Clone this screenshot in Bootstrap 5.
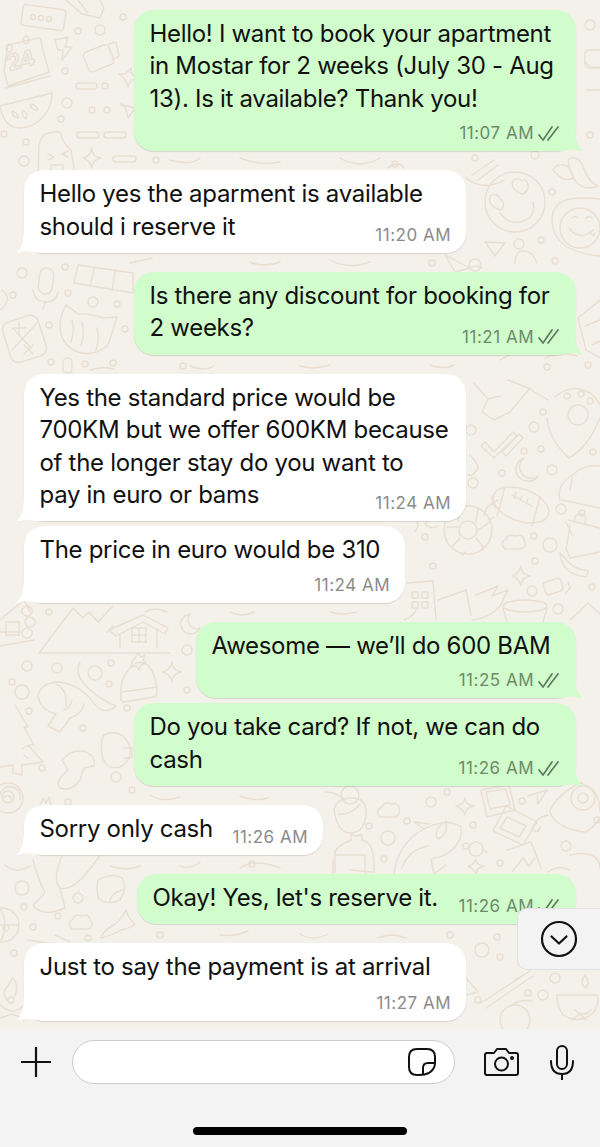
<!DOCTYPE html>
<html lang="en">
<head>
  <meta charset="UTF-8">
  <title>Chat</title>
  <link href="https://cdn.jsdelivr.net/npm/bootstrap@5.3.2/dist/css/bootstrap.min.css" rel="stylesheet" />
  <style>
    body {
      width: 600px;
      height: 1147px;
      overflow: hidden;
      background: #f3f3f3;
      font-family: "Inter", "Liberation Sans", sans-serif;
    }
    .chat-area {
      height: 1029px;
      padding-top: 10px;
      background: #f4f1ea;
      overflow: hidden;
    }
    .doodles {
      position: absolute;
      top: 0;
      left: 0;
      fill: none;
      stroke: #e8dfd2;
      stroke-width: 1.4;
      stroke-linecap: round;
      stroke-linejoin: round;
    }
    .doodles text {
      font-family: "Inter", sans-serif;
      font-size: 22px;
      font-weight: 700;
    }
    .bubble {
      position: relative;
      padding: 8px 15px 11px 15.5px;
      border-radius: 20px;
      box-shadow: 0 1px 1px rgba(0, 0, 0, .12);
      color: #111;
      font-size: 24px;
      letter-spacing: -.3px;
      line-height: 32.4px;
    }
    .bubble::after {
      content: "";
      position: absolute;
      bottom: 0;
      width: 26px;
      height: 26px;
    }
    .bubble-in {
      align-self: flex-start;
      margin-left: 24px;
      background: #fff;
    }
    .bubble-in::after {
      left: -8px;
      background: #fff;
      clip-path: path("M8 0 L26 26 L8 24 C6 25 3 26 0 26 C5 22 8 16 8 0 Z");
    }
    .bubble-out {
      align-self: flex-end;
      margin-right: 24px;
      padding-right: 17px;
      background: #d0fdcb;
    }
    .bubble-out::after {
      right: -7px;
      background: #d0fdcb;
      clip-path: path("M18 0 L0 26 L18 24 C20 25 23 26 26 26 C21 22 18 16 18 0 Z");
    }
    .w-full { width: 442px; }
    .w-price { width: 381px; }
    .w-awesome { width: 380px; }
    .w-sorry { width: 299px; }
    .w-okay { width: 439px; }
    .gap-big { margin-top: 19px; }
    .gap-tiny { margin-top: 5px; }
    .pb-one { padding-bottom: 10.6px; }
    .stamp {
      display: flex;
      align-items: center;
      gap: 4px;
      flex-shrink: 0;
      height: 14px;
      font-size: 17px;
      letter-spacing: .5px;
      line-height: 14px;
      white-space: nowrap;
      color: #8b8b8b;
    }
    .bubble-out .stamp { color: #6d8a6c; }
    .stamp-row { margin-top: 12px; }
    .stamp-row-last { margin-top: 13px; }
    .stamp-float {
      position: absolute;
      right: 15px;
      bottom: 11px;
    }
    .bubble-out .stamp-float { right: 16px; }
    .bubble-out .stamp-row { margin-right: -1px; }
    .msg-text {
      width: fit-content;
      margin-bottom: -1px;
      white-space: pre-line;
    }
    .scroll-btn {
      position: absolute;
      top: 908px;
      left: 517px;
      width: 83px;
      height: 62px;
      background: #f3f3f3;
      border: 1px solid #e2e2e2;
      border-right: 0;
      border-radius: 10px 0 0 10px;
    }
    .composer {
      height: 118px;
      padding-top: 11px;
    }
    .composer-row { padding: 0 25px 0 21px; }
    .msg-input {
      width: 383px;
      height: 44px;
      margin: 0 29px 0 21px;
      padding-right: 18px;
      background: #fff;
      border: 1px solid #cdcdcd;
      border-radius: 22px;
    }
    .home-bar {
      width: 214px;
      height: 8px;
      margin: 43px auto 0;
      background: #000;
      border-radius: 4px;
    }
    .cam-icon { margin-right: 31px; }
  </style>
</head>
<body>

<div class="position-relative d-flex flex-column chat-area">
  <svg class="doodles" width="600" height="1029" viewBox="0 0 600 1029" aria-hidden="true">
    <!-- top left -->
    <rect x="22" y="7" width="43" height="21" rx="3" transform="rotate(8 43 17)"/>
    <circle cx="33" cy="17" r="2.5"/><circle cx="41" cy="18" r="2.5"/><circle cx="49" cy="19" r="2.5"/>
    <path d="M8 45 L38 38 Q41 38 41 42 L49 72 L8 86 L4 70 Z M6 88 L50 76 M9 44 a3 4 0 1 0 .1 0 M26 36 a3 4 0 1 0 .1 0"/>
    <text x="9" y="71" transform="rotate(-14 9 71)">24</text>
    <path d="M55 40 L68 37 L65 47 L72 47 L62 60 L63 50 L58 50 Z"/>
    <rect x="85" y="48" width="27" height="21" rx="4" transform="rotate(-22 98 58)"/>
    <path d="M109 44 L116 42 L119 56 L112 60"/>
    <path d="M0 106 L52 93 C52 115 34 128 20 128 C8 128 2 118 0 106 Z M12 111 q5 1 6 7 q-6 -1 -6 -7 M23 110 q5 3 3 9 q-5 -3 -3 -9 M30 104 q6 0 8 6 q-6 1 -8 -6"/>
    <circle cx="78" cy="31" r="3"/><circle cx="100" cy="30" r="5"/><circle cx="123" cy="17" r="3"/><circle cx="65" cy="71" r="3"/>
    <circle cx="105" cy="86" r="3"/><rect x="76" y="83" width="21" height="6" rx="3"/>
    <path d="M131 68 Q130 77 140 78 Q129 78 128 88 Q127 79 119 74 Q127 75 131 68 Z"/>
    <circle cx="67" cy="103" r="5"/><circle cx="61" cy="119" r="3"/><circle cx="92" cy="110" r="3"/><circle cx="107" cy="110" r="3"/>
    <path d="M120 104 L135 108 L128 118 L126 108 Z"/>
    <circle cx="4" cy="134" r="3"/><circle cx="26" cy="142" r="3"/><circle cx="24" cy="161" r="5"/>
    <rect x="77" y="132" width="22" height="6" rx="3"/><rect x="104" y="132" width="22" height="6" rx="3"/><rect x="113" y="156" width="23" height="6" rx="3"/>
    <path d="M38 175 L39 145 Q41 132 55 132 L60 132 L63 140 L66 145 L71 150 L75 175 M48 154 l6 3 l-6 3 M68 151 l-6 3 l6 3 M51 165 h12 v6 q-6 6 -12 0 z"/>
    <path d="M92 148 Q92 157 101 158 Q92 160 92 168 Q90 160 83 158 Q90 157 92 148 Z"/>
    <path d="M66 0 L82 14 L100 18 L104 8 L100 0 M78 0 L88 13"/>
    <!-- top right strip -->
    <rect x="585" y="50" width="30" height="18" rx="4"/><circle cx="590" cy="135" r="3"/><circle cx="590" cy="25" r="5"/>
    <path d="M585 62 q6 8 15 5 M586 90 h14"/>
    <!-- faces right -->
    <circle cx="515" cy="202" r="30"/>
    <path d="M500 199 c-4 -8 -13 -4 -10 3 c2 4 6 7 11 8 c3 -4 4 -8 -1 -11 Z M522 181 c-5 -5 -12 -1 -9 6 c1 3 6 6 10 7 c4 -2 7 -7 4 -12 c-1 -3 -4 -3 -5 -1 Z M500 213 q12 16 29 5 q6 -6 4 -16"/>
    <path d="M600 256 C580 254 552 248 552 220 C552 198 574 196 600 199"/>
    <circle cx="580" cy="228" r="20"/>
    <path d="M569 228 q11 14 24 2 M572 218 q3 -3 6 0 M586 218 q3 -3 6 0 M590 232 q4 6 5 1"/>
    <path d="M553 170 q4 -8 14 -4 q4 2 6 12 q-8 4 -14 -2 z M568 160 q8 -6 14 4 q6 18 16 22 q-20 8 -28 -16 z"/>
    <circle cx="552" cy="192" r="3"/><circle cx="541" cy="240" r="3"/><circle cx="519" cy="244" r="5"/><circle cx="475" cy="265" r="6"/><circle cx="555" cy="261" r="3"/><circle cx="475" cy="158" r="3"/><circle cx="535" cy="155" r="4"/>
    <path d="M485 242 L505 243 L495 256 Z"/>
    <path d="M472 175 L494 160 M478 180 L498 165 M515 263 q0 -12 8 -12 q10 0 14 12"/>
    <path d="M445 255 L470 268 L455 272 Z"/>
    <path d="M600 300 L578 318 L586 350 L600 358 M585 326 l15 -6 M592 345 l8 -4"/>
    <path d="M500 360 q20 -12 40 -8 M545 358 q18 -8 32 -2"/><circle cx="547" cy="367" r="3"/><circle cx="588" cy="365" r="3"/>
    <!-- left mid -->
    <circle cx="22" cy="273" r="5"/><circle cx="65" cy="267" r="3"/><circle cx="68" cy="293" r="3"/><circle cx="13" cy="295" r="3"/><circle cx="93" cy="302" r="5"/><circle cx="117" cy="304" r="3"/><circle cx="49" cy="325" r="3"/><circle cx="125" cy="329" r="3"/><circle cx="51" cy="362" r="3"/><circle cx="85" cy="364" r="3"/><circle cx="113" cy="363" r="3"/>
    <rect x="39" y="268" width="14" height="26" rx="7" transform="rotate(6 46 281)"/>
    <path d="M33 290 q2 12 13 12 q10 0 12 -10 M45 303 l-2 6"/>
    <path d="M78 265 L133 273 L133 293 L74 283 Z M94 268 L90 287 M115 271 L112 291"/>
    <path d="M66 305 L78 314 Q90 313 103 318 L117 317 Q113 330 108 345 Q95 357 78 352 Q60 345 60 325 Q60 315 66 305 Z M72 320 q3 10 -1 22 M82 322 q3 10 -1 24 M97 328 q3 10 -1 22"/>
    <rect x="6" y="318" width="37" height="42" rx="8" transform="rotate(-18 24 339)"/>
    <path d="M13 328 L31 348 M38 322 L12 350 M19 322 v12 M12 328 h14 M24 345 l9 9 M33 345 l-9 9"/>
    <rect x="63" y="358" width="9" height="15" rx="4.5"/>
    <path d="M0 310 q14 -10 2 -20"/>
    <!-- left lower, between the white bubbles and the house -->
    <path d="M0 620 L24 600 L30 612 M0 632 h20 M0 646 L34 640 M6 622 h13 v13 h-13 z M27 616 a5 5 0 1 1 .1 0 M30 627 a5 5 0 1 1 .1 0 M27 638 a5 5 0 1 1 .1 0"/>
    <circle cx="49" cy="612" r="3"/>
    <path d="M39 653 L73 608 L83 618 L89 612 L98 622 L113 606 M113 626 L107 632 M39 653 H170 M109 630 L143 615 L168 628 L165 634 L143 622 L116 636 Z M120 635 V648 M157 630 V648 M132 628 h14 v14 h-14 z M139 628 v14 M132 635 h14"/>
    <path d="M190 614 a10 10 0 1 0 10 14 a9 9 0 0 1 -10 -14"/>
    <path d="M121 695 q-2 -20 15 -32 q18 -4 21 28 q0 6 -3 6 l-30 5 q-4 0 -3 -7 Z M122 692 l35 -5 M135 658 l3 -5 l3 4 l4 -2 l-2 5 l3 3 l-5 2 l-2 5 l-3 -4 l-5 1 l1 -5 z"/>
    <path d="M172 662 Q172 670 181 672 Q172 674 172 682 Q170 674 163 672 Q170 670 172 662 Z"/>
    <circle cx="95" cy="673" r="7"/><circle cx="111" cy="663" r="3"/><circle cx="109" cy="684" r="3"/><circle cx="27" cy="666" r="5"/><circle cx="57" cy="668" r="5"/><circle cx="22" cy="692" r="7"/><circle cx="12" cy="682" r="3"/><circle cx="187" cy="650" r="5"/><circle cx="187" cy="690" r="3"/><circle cx="29" cy="711" r="3"/><circle cx="83" cy="728" r="3"/><circle cx="127" cy="708" r="3"/><circle cx="42" cy="768" r="3"/><circle cx="116" cy="777" r="5"/><circle cx="132" cy="790" r="3"/>
    <path d="M80 662 q-6 12 6 24 q14 14 30 20 q-14 12 -26 -8 q-16 -16 -34 -16 q-16 2 -18 14 q2 14 18 18 l-8 12 l12 6 l10 -14 q12 -4 14 -14 M56 684 q12 6 10 22 M72 700 q-2 8 -8 10"/>
    <path d="M15 705 L28 727 L24 727 L34 745 L28 745 L43 762 L22 765 L22 775 L13 773 V765 L0 767 M28 745 l-6 4 M24 755 l4 3"/>
    <path d="M62 760 q10 -12 24 -8 q10 4 8 14 l-10 2 l-4 12 q-8 12 -20 8 q-6 -6 8 -18 z"/>
    <path d="M104 735 q18 -8 26 12 q2 14 -10 20 q-14 4 -18 -12 q-2 -14 2 -20 M124 748 h8 v10 h-8"/>
    <path d="M0 794 a10 10 0 0 1 20 6 M3 798 a5 5 0 0 1 9 2"/>
    <circle cx="8" cy="798" r="15"/><circle cx="8" cy="797" r="6"/>
    <path d="M40 806 l3 -8 l3 5 l3 -6 l2 8"/>
    <circle cx="68" cy="802" r="3"/>
    <!-- middle left -->
    <path d="M33 860 Q38 880 45 892 Q40 900 33 905 Q42 918 65 908 L60 888 Q75 893 100 855 M60 888 Q52 880 62 856 M30 866 Q16 875 5 865"/>
    <path d="M98 880 q14 -8 24 -2 q6 10 -2 22 q-12 6 -22 -2 q-2 -10 0 -18 M110 902 q0 -8 12 -12"/>
    <circle cx="22" cy="888" r="7"/><circle cx="78" cy="898" r="5"/><circle cx="24" cy="907" r="3"/><circle cx="58" cy="916" r="3"/><circle cx="33" cy="927" r="3"/><circle cx="88" cy="938" r="3"/><circle cx="14" cy="953" r="3"/>
    <path d="M72 929 q-6 -6 1 -10 q2 -6 9 -3 q7 -3 8 4 q5 5 -1 9 z"/>
    <path d="M101 938 q10 -2 20 -8 q10 -2 14 -6 l-6 -6 l-3 -8 q-6 12 -14 16 q-8 4 -11 12 z"/>
    <circle cx="2" cy="925" r="17"/>
    <path d="M0 908 q10 17 0 34 M-15 925 h34 M6 925 a3 3 0 1 0 .1 0 M28 940 L62 945 M55 935 L70 942"/>
    <path d="M7 1000 q-6 -8 1 -14 q3 -6 5 -8 q6 8 2 18 M0 1005 q14 12 24 0 M0 1018 l12 -4 l10 4"/>
    <circle cx="11" cy="1000" r="3"/>
    <!-- girl, fish and photo frames -->
    <circle cx="350" cy="795" r="9"/>
    <path d="M334 810 q2 -12 18 -12 q14 0 14 14 q0 12 -6 18 q-10 6 -18 0 q-6 -6 -8 -20 z M338 814 q12 2 22 -10 M351 834 v6 q-14 6 -16 12 v20 M351 834 q6 4 11 0 v6 q10 2 12 20 v13 M335 855 h30 v18 M333 860 V873"/>
    <path d="M380 817 q-6 -6 2 -10 q2 -6 9 -3 q8 -2 8 5 q2 6 -4 8 z"/>
    <circle cx="431" cy="802" r="5"/><circle cx="447" cy="792" r="3"/><circle cx="369" cy="826" r="3"/><circle cx="407" cy="821" r="3"/><circle cx="388" cy="838" r="7"/><circle cx="384" cy="859" r="3"/><circle cx="473" cy="825" r="3"/><circle cx="466" cy="846" r="3"/><circle cx="500" cy="863" r="3"/><circle cx="522" cy="801" r="3"/><circle cx="566" cy="846" r="5"/><circle cx="597" cy="820" r="3"/>
    <path d="M465 798 Q465 805 474 806 Q465 808 465 815 Q463 808 456 806 Q463 805 465 798 Z"/>
    <path d="M394 873 q4 -30 30 -44 q24 -12 37 -2 q2 12 -8 22 q-8 8 -22 10 M424 829 l-10 -7 l15 2 M431 859 l3 15 l12 -9 M402 868 q6 -18 26 -22 M446 821 q2 14 -8 18 q-6 -8 8 -18"/>
    <path d="M481 790 L509 785 L515 810 L487 817 Z M486 792 l20 -3 l4 16 l-20 4 z"/>
    <path d="M506 806 L537 822 L523 845 L493 831 Z M507 817 l19 9 l-7 11 l-19 -9 z"/>
    <path d="M507 850 L531 842 L541 868 M512 872 L523 858 L529 866 L535 858"/>
    <path d="M528 796 L547 790 L538 804 L537 796"/>
    <path d="M550 810 q10 -18 32 -28 M576 782 q24 4 24 30 M550 812 q6 16 34 20 q6 0 16 -14 M548 815 q-12 2 -16 14 q6 6 8 -2"/>
    <circle cx="583" cy="798" r="12"/><circle cx="583" cy="798" r="5"/>
    <path d="M476 859 q0 6 8 7 q-8 2 -8 9 q-2 -7 -8 -9 q6 -1 8 -7 z M482 848 l5 5 M476 842 a7 7 0 1 0 .1 0"/>
    <path d="M548 872 q10 -8 22 -2 M570 855 q30 -6 30 14"/>
    <!-- right lower, behind the scroll button -->
    <circle cx="497" cy="937" r="3"/><circle cx="482" cy="950" r="7"/><circle cx="500" cy="957" r="3"/><circle cx="450" cy="935" r="3"/>
    <circle cx="555" cy="978" r="5"/><circle cx="543" cy="995" r="5"/><circle cx="528" cy="993" r="3"/><circle cx="515" cy="1020" r="15"/><circle cx="478" cy="1000" r="3"/>
    <path d="M481 1003 L530 971 M486 1008 L533 976 M515 980 L525 974 M512 1005 q8 -6 20 -4"/>
    <path d="M557 995 h40 q3 8 -4 18 q-14 12 -30 2 q-6 -8 -6 -20 M585 975 q-6 8 0 13 q6 -4 0 -13 M575 1010 q8 8 16 0 M572 1020 l8 -6 l6 6 M466 978 L478 992 L466 995"/>
    <!-- right of the white bubbles -->
    <path d="M485 442 L494 452 L513 432 L517 436 L494 458 L481 446 Z M502 452 L519 434 L523 438 L506 456 Z"/>
    <path d="M555 397 q12 -10 24 -8 q14 2 21 16 M547 418 q2 22 22 40 q20 -12 31 -40 M578 405 a10 10 0 1 0 .1 0 M567 393 a3 3 0 1 0 .1 0 M581 391 a3 3 0 1 0 .1 0 M590 398 a3 3 0 1 0 .1 0"/>
    <path d="M474 383 L488 399 L482 412 L494 420 L510 412 L530 388 M488 399 L500 396 M508 380 L528 388 L548 400"/>
    <circle cx="534" cy="427" r="5"/><circle cx="524" cy="451" r="3"/><circle cx="541" cy="449" r="3"/><circle cx="543" cy="412" r="3"/><circle cx="552" cy="470" r="5"/><circle cx="502" cy="473" r="3"/><circle cx="471" cy="430" r="5"/><circle cx="473" cy="483" r="5"/><circle cx="561" cy="509" r="5"/><circle cx="582" cy="513" r="3"/><circle cx="534" cy="536" r="3"/><circle cx="550" cy="545" r="7"/><circle cx="535" cy="561" r="3"/><circle cx="592" cy="587" r="3"/><circle cx="532" cy="591" r="5"/><circle cx="433" cy="566" r="3"/><circle cx="425" cy="537" r="3"/><circle cx="593" cy="452" r="3"/><circle cx="558" cy="609" r="5"/>
    <path d="M524 458 a12 12 0 1 0 14 18 a11 11 0 0 1 -14 -18"/>
    <path d="M470 455 q8 8 8 14 q-6 8 -10 6"/>
    <ellipse cx="521" cy="505" rx="29" ry="16" transform="rotate(20 521 505)"/>
    <path d="M505 487 L497 516 M540 497 L532 526 M512 495 L532 506 M516 493 l-2 5 M522 496 l-2 5 M528 499 l-2 5"/>
    <path d="M560 500 q-4 -16 14 -26 q10 -10 26 -8 M562 500 L600 508 M572 478 l-2 12"/>
    <circle cx="468" cy="530" r="24"/><circle cx="468" cy="530" r="9"/>
    <path d="M462 506 l-4 15 M478 508 l-2 14 M447 527 l12 0 M478 530 l12 -8 M460 538 l-8 9 M476 538 l8 10 M489 520 l5 -3 M462 555 l3 -3 M438 510 q-10 6 -13 14 q6 6 13 2 M484 515 q0 -8 14 -15 M492 496 q0 8 4 12"/>
    <path d="M505 549 q-6 -6 1 -10 q2 -6 9 -3 q8 -3 9 4 q4 6 -3 9 z"/>
    <path d="M568 520 L600 528 M566 522 L572 535 M566 548 L570 558 L600 552 M570 525 L566 550 M575 522 q-2 -8 6 -8 q6 0 4 10"/>
    <path d="M560 553 q2 22 26 24 q2 -4 2 -6 q-16 -2 -24 -14 z"/>
    <path d="M521 566 Q521 574 530 576 Q521 578 521 586 Q519 578 512 576 Q519 574 521 566 Z"/>
    <rect x="544" y="580" width="18" height="13" rx="3" transform="rotate(-18 553 586)"/>
    <path d="M438 600 L466 590 L471 615 M407 583 L433 581 L436 620 M412 592 h6 v6 h-6 z M422 592 h6 v6 h-6 z M412 602 h6 v6 h-6 z M422 602 h6 v6 h-6 z"/>
    <path d="M476 595 L498 586 L492 596 L508 590 L500 606 Q490 618 472 620"/>
    <ellipse cx="525" cy="606" rx="22" ry="6"/>
    <path d="M503 608 L507 622 M547 608 L543 622 M570 620 L588 603 L600 614 M565 594 l5 -6 l-2 -6"/>
    <!-- bits around the sent bubbles -->
    <path d="M466 178 q18 14 38 2 M404 620 q10 -4 12 -10 M415 532 q6 -8 0 -12 M388 168 q10 -8 16 0 M340 158 q20 12 40 0 M240 158 q18 8 40 4 M170 160 q20 6 30 -2 M130 263 L152 258 M330 260 q18 10 40 2 M250 262 q14 6 30 0 M470 268 q6 -4 12 0 M300 366 q14 4 30 -1 M190 366 q14 6 24 0 M90 370 q12 -4 24 -1 M430 365 q14 5 24 0"/>
    <path d="M145 612 q10 -6 22 0 M230 612 q12 6 24 0 M330 612 q14 4 26 0 M345 800 q-8 -8 -20 -8 M150 795 q12 8 30 2 M240 796 q14 6 28 2 M110 866 q16 6 30 0 M180 866 q10 4 20 -4 M240 868 q14 -10 40 0 M220 935 q14 2 28 -4 M300 934 q14 8 28 0 M378 938 q14 -6 28 0 M350 870 L372 872"/>
    <circle cx="156" cy="160" r="3"/><circle cx="395" cy="164" r="3"/><circle cx="252" cy="864" r="3"/><circle cx="160" cy="935" r="3"/><circle cx="432" cy="263" r="3"/><circle cx="183" cy="366" r="3"/>
  </svg>

  <div class="bubble bubble-out w-full">
    <div class="msg-text">Hello! I want to book your apartment
in Mostar for 2 weeks (July 30 - Aug
13). Is it available? Thank you!</div>
    <div class="d-flex justify-content-end stamp-row">
      <span class="stamp">11:07 AM <svg width="22" height="15" viewBox="0 0 22 15" fill="none" stroke="#5f7a5e" stroke-width="1.7" stroke-linecap="round" stroke-linejoin="round"><path d="M1 9 L5 14 L14 1 M10 14 L20 1"/></svg></span>
    </div>
  </div>

  <div class="bubble bubble-in w-full gap-big">
    <div class="msg-text">Hello yes the aparment is available
should i reserve it</div>
    <span class="stamp stamp-float">11:20 AM</span>
  </div>

  <div class="bubble bubble-out w-full gap-big">
    <div class="msg-text">Is there any discount for booking for
2 weeks?</div>
    <span class="stamp stamp-float">11:21 AM <svg width="22" height="15" viewBox="0 0 22 15" fill="none" stroke="#5f7a5e" stroke-width="1.7" stroke-linecap="round" stroke-linejoin="round"><path d="M1 9 L5 14 L14 1 M10 14 L20 1"/></svg></span>
  </div>

  <div class="bubble bubble-in w-full gap-big">
    <div class="msg-text">Yes the standard price would be
700KM but we offer 600KM because
of the longer stay do you want to
pay in euro or bams</div>
    <span class="stamp stamp-float">11:24 AM</span>
  </div>

  <div class="bubble bubble-in w-price gap-tiny">
    <div class="msg-text">The price in euro would be 310</div>
    <div class="d-flex justify-content-end stamp-row"><span class="stamp">11:24 AM</span></div>
  </div>

  <div class="bubble bubble-out w-awesome gap-big">
    <div class="msg-text">Awesome — we’ll do 600 BAM</div>
    <div class="d-flex justify-content-end stamp-row">
      <span class="stamp">11:25 AM <svg width="22" height="15" viewBox="0 0 22 15" fill="none" stroke="#5f7a5e" stroke-width="1.7" stroke-linecap="round" stroke-linejoin="round"><path d="M1 9 L5 14 L14 1 M10 14 L20 1"/></svg></span>
    </div>
  </div>

  <div class="bubble bubble-out w-full gap-tiny">
    <div class="msg-text">Do you take card? If not, we can do
cash</div>
    <span class="stamp stamp-float">11:26 AM <svg width="22" height="15" viewBox="0 0 22 15" fill="none" stroke="#5f7a5e" stroke-width="1.7" stroke-linecap="round" stroke-linejoin="round"><path d="M1 9 L5 14 L14 1 M10 14 L20 1"/></svg></span>
  </div>

  <div class="bubble bubble-in w-sorry gap-big pb-one">
    <div class="msg-text">Sorry only cash</div>
    <span class="stamp stamp-float">11:26 AM</span>
  </div>

  <div class="bubble bubble-out w-okay gap-big pb-one">
    <div class="msg-text">Okay! Yes, let's reserve it.</div>
    <span class="stamp stamp-float">11:26 AM <svg width="22" height="15" viewBox="0 0 22 15" fill="none" stroke="#5f7a5e" stroke-width="1.7" stroke-linecap="round" stroke-linejoin="round"><path d="M1 9 L5 14 L14 1 M10 14 L20 1"/></svg></span>
  </div>

  <div class="bubble bubble-in w-full gap-big">
    <div class="msg-text">Just to say the payment is at arrival</div>
    <div class="d-flex justify-content-end stamp-row-last"><span class="stamp">11:27 AM</span></div>
  </div>

  <div class="d-flex align-items-center justify-content-center scroll-btn">
    <svg width="38" height="38" viewBox="0 0 38 38" fill="none" stroke="#111" stroke-width="2.2" stroke-linecap="round" stroke-linejoin="round"><circle cx="19" cy="19" r="17"/><path d="M11.5 16.5 L19 23.5 L26.5 16.5"/></svg>
  </div>
</div>

<div class="composer">
  <div class="d-flex align-items-center composer-row">
    <svg width="30" height="30" viewBox="0 0 30 30" fill="none" stroke="#111" stroke-width="2.2" stroke-linecap="round"><path d="M15 0 V30 M0 15 H30"/></svg>
    <div class="d-flex align-items-center justify-content-end msg-input">
      <svg width="28" height="28" viewBox="0 0 28 28" fill="none" stroke="#111" stroke-width="2" stroke-linejoin="round"><path d="M9 1 H19 Q27 1 27 9 V15 Q27 21 21 25 Q17 27 11 27 H9 Q1 27 1 19 V9 Q1 1 9 1 Z"/><path d="M27 15 H20 Q15 15 15 20 V27"/></svg>
    </div>
    <svg class="cam-icon" width="35" height="28" viewBox="0 0 35 28" fill="none" stroke="#111" stroke-width="2" stroke-linejoin="round"><path d="M3 5 H10 L13 1 H22 L25 5 H32 Q34 5 34 7 V25 Q34 27 32 27 H3 Q1 27 1 25 V7 Q1 5 3 5 Z"/><circle cx="17.5" cy="16" r="6.5"/><circle cx="28" cy="10" r="1" fill="#111"/></svg>
    <svg width="24" height="35" viewBox="0 0 24 35" fill="none" stroke="#111" stroke-width="2" stroke-linecap="round"><rect x="7" y="1" width="10" height="23" rx="5"/><path d="M1 16 Q1 29 12 29 Q23 29 23 16 M12 29 V35"/></svg>
  </div>
  <div class="home-bar"></div>
</div>

</body>
</html>
